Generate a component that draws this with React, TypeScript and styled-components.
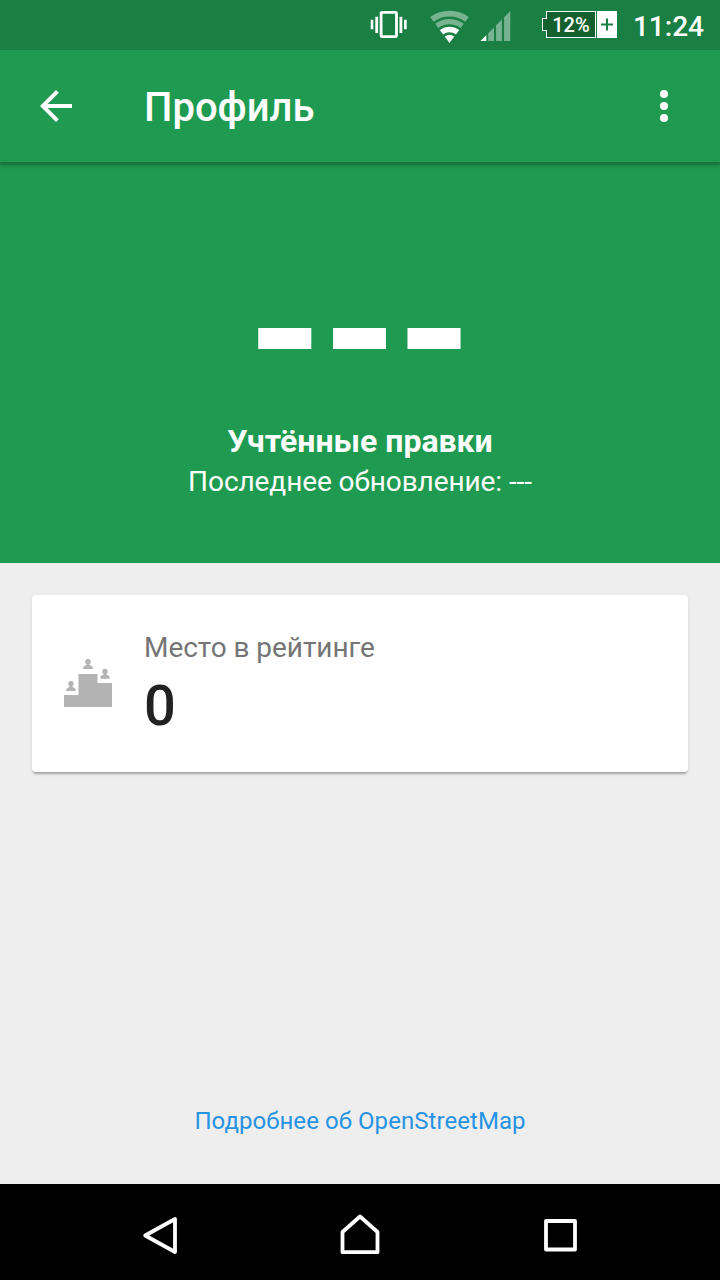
import React from "react";
import styled, { createGlobalStyle } from "styled-components";

const GlobalStyle = createGlobalStyle`
  * { box-sizing: border-box; }
  body { margin: 0; font-family: Roboto, "Liberation Sans", sans-serif; background: #eeeeee; }
`;

const Screen = styled.div`
  width: 720px;
  height: 1280px;
  display: flex;
  flex-direction: column;
  background: #eeeeee;
  overflow: hidden;
`;

const StatusBar = styled.header`
  height: 50px;
  flex: none;
  display: flex;
  align-items: center;
  justify-content: flex-end;
  padding-right: 16px;
  background: #1a7f43;
  color: #fff;
`;

const StatusIcon = styled.svg<{ $gap: number }>`
  flex: none;
  margin-right: ${(p) => p.$gap}px;
`;

const Battery = styled.div`
  display: flex;
  align-items: center;
  height: 27px;
  margin: 0 16px 2px 0;
`;

const BatteryTip = styled.div`
  width: 5px;
  height: 13px;
  margin-right: -1px;
  border: 1px solid #fff;
  border-right: 0;
  background: #14602f;
  z-index: 1;
`;

const BatteryLevel = styled.div`
  width: 50px;
  height: 27px;
  border: 1px solid #fff;
  background: #14602f;
  font-size: 20px;
  font-weight: 500;
  line-height: 26px;
  text-align: center;
`;

const BatteryPlus = styled.svg`
  margin-left: 1px;
  background: #fff;
`;

const Clock = styled.time`
  font-size: 28px;
  font-weight: 500;
  line-height: 34px;
  padding-top: 3px;
`;

const Toolbar = styled.nav`
  height: 112px;
  flex: none;
  display: flex;
  align-items: center;
  padding: 0 32px;
  background: #1f9a51;
  box-shadow: 0 3px 1px rgba(26, 80, 48, 0.32), 0 4px 4px rgba(26, 80, 48, 0.28);
  z-index: 1;
`;

const IconButton = styled.button`
  display: flex;
  width: 48px;
  height: 48px;
  padding: 0;
  border: 0;
  background: none;
`;

const Title = styled.h1`
  flex: 1;
  margin: 0;
  padding: 4px 0 0 64px;
  color: #fff;
  font-size: 40px;
  font-weight: 500;
  line-height: 48px;
`;

const Hero = styled.section`
  height: 401px;
  flex: none;
  padding-top: 80px;
  background: #1f9a51;
  color: #fff;
  text-align: center;
`;

const EditCount = styled.div`
  padding-right: 1px;
  font-size: 192px;
  font-weight: 700;
  letter-spacing: -1px;
  line-height: 180px;
`;

const HeroTitle = styled.h2`
  margin: 0;
  font-size: 32px;
  font-weight: 700;
  line-height: 38px;
`;

const HeroNote = styled.p`
  margin: 0;
  font-size: 28px;
  letter-spacing: -0.08px;
  line-height: 44px;
`;

const Content = styled.main`
  flex: 1;
  display: flex;
  flex-direction: column;
  justify-content: space-between;
  padding: 32px 32px 46px;
`;

const Card = styled.article`
  height: 177px;
  display: flex;
  align-items: flex-start;
  gap: 32px;
  padding: 34px 32px 0;
  border-radius: 4px;
  background: #fff;
  box-shadow: 0 3px 2px -1px rgba(0, 0, 0, 0.26), 0 2px 4px rgba(0, 0, 0, 0.08);
`;

const RankIcon = styled.svg`
  flex: none;
  margin-top: 30px;
`;

const RankLabel = styled.div`
  color: #757575;
  font-size: 28px;
  letter-spacing: -0.05px;
  line-height: 38px;
`;

const RankValue = styled.div`
  margin-top: 6px;
  color: #212121;
  font-size: 56px;
  font-weight: 500;
  line-height: 66px;
`;

const MoreLink = styled.a`
  align-self: center;
  color: #2693e3;
  font-size: 24px;
  letter-spacing: 0.06px;
  line-height: 34px;
`;

const NavBar = styled.footer`
  height: 96px;
  flex: none;
  display: flex;
  align-items: center;
  justify-content: center;
  gap: 152px;
  padding-top: 8px;
  background: #000;
`;

const Person = ({ x, y }: { x: number; y: number }) => (
  <g transform={`translate(${x} ${y})`}>
    <circle cx="5" cy="2.7" r="2.7" />
    <path d="M3.6 4h2.8v2q3.4.6 3.4 4H.2q0-3.4 3.4-4z" />
  </g>
);

export default function App() {
  return (
    <>
      <GlobalStyle />
      <Screen>
        <StatusBar>
          <StatusIcon $gap={23} width="37" height="30" viewBox="0 0 37 30" fill="none" stroke="#fff">
            <rect x="11.1" y="2.3" width="15.4" height="24.4" rx="1" strokeWidth="2.8" />
            <path d="M6.7 6.7V23M30.9 6.7V23" strokeWidth="2.8" />
            <path d="M2 9.7v9.6M35.4 9.7v9.6" strokeWidth="2.6" />
          </StatusIcon>
          <StatusIcon $gap={11} width="39" height="36" viewBox="0 0 39 36" fill="#78b390">
            <path d="M.25 10.1A32.3 32.3 0 0 1 38.75 10.1L35.3 14.7A26.5 26.5 0 0 0 3.7 14.7Z" />
            <path d="M5.2 16.7A24 24 0 0 1 33.8 16.7L30.6 21A18.7 18.7 0 0 0 8.4 21Z" />
            <path d="M9.8 22.9A16.3 16.3 0 0 1 29.2 22.9L25.9 27.4A10.7 10.7 0 0 0 13.1 27.4Z" fill="#fff" />
            <path d="M14.7 29.6A8 8 0 0 1 24.3 29.6L19.5 36Z" fill="#fff" />
          </StatusIcon>
          <StatusIcon $gap={31} width="31" height="34" viewBox="0 0 31 34" fill="#78b390">
            <path d="M.4 33 6.4 27V33z" fill="#fff" />
            <path d="M8.2 25.2 14 19.4V33H8.2zM16.1 17.3l5.8-5.8V33h-5.8zM24.1 9.3 30.3 3.1V33h-6.2z" />
          </StatusIcon>
          <Battery>
            <BatteryTip />
            <BatteryLevel>12%</BatteryLevel>
            <BatteryPlus width="20" height="27" viewBox="0 0 20 27">
              <path d="M4 13.5h12M10 7.5v12" stroke="#1a7f43" strokeWidth="2" />
            </BatteryPlus>
          </Battery>
          <Clock>11:24</Clock>
        </StatusBar>

        <Toolbar>
          <IconButton aria-label="Назад">
            <svg width="48" height="48" viewBox="0 0 24 24" fill="#fff">
              <path d="M20 11H7.83l5.59-5.59L12 4l-8 8 8 8 1.41-1.41L7.83 13H20z" />
            </svg>
          </IconButton>
          <Title>Профиль</Title>
          <IconButton aria-label="Меню">
            <svg width="48" height="48" viewBox="0 0 24 24" fill="#fff">
              <circle cx="12" cy="6" r="2" />
              <circle cx="12" cy="12" r="2" />
              <circle cx="12" cy="18" r="2" />
            </svg>
          </IconButton>
        </Toolbar>

        <Hero>
          <EditCount>---</EditCount>
          <HeroTitle>Учтённые правки</HeroTitle>
          <HeroNote>Последнее обновление: ---</HeroNote>
        </Hero>

        <Content>
          <Card>
            <RankIcon width="48" height="48" viewBox="0 0 48 48" fill="#b3b3b3">
              <path d="M0 36h14.5V15h19V24H48V48H0z" />
              <Person x={19} y={0} />
              <Person x={36} y={9.8} />
              <Person x={2} y={22} />
            </RankIcon>
            <div>
              <RankLabel>Место в рейтинге</RankLabel>
              <RankValue>0</RankValue>
            </div>
          </Card>
          <MoreLink>Подробнее об OpenStreetMap</MoreLink>
        </Content>

        <NavBar>
          <svg width="48" height="48" viewBox="0 0 48 48" fill="none" stroke="#fff" strokeWidth="3.8" strokeLinejoin="round">
            <path d="M39 7v33L9.2 23.5z" />
          </svg>
          <svg width="48" height="48" viewBox="0 0 48 48" fill="none" stroke="#fff" strokeWidth="3.8" strokeLinejoin="round">
            <path d="M24 4.5 41.5 20v20.2h-35V20z" />
          </svg>
          <svg width="48" height="48" viewBox="0 0 48 48" fill="none" stroke="#fff" strokeWidth="3.8" strokeLinejoin="round">
            <rect x="10" y="9" width="29" height="28.5" />
          </svg>
        </NavBar>
      </Screen>
    </>
  );
}
